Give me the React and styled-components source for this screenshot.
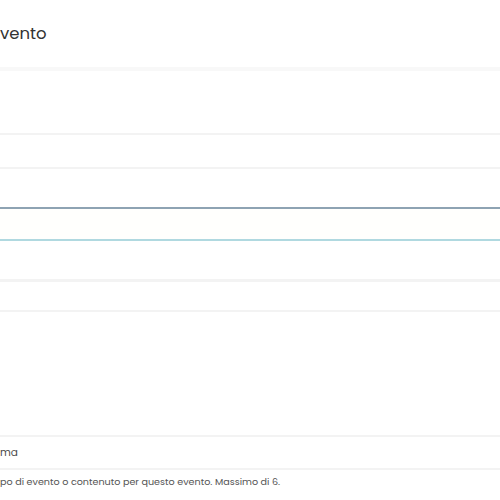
import * as React from "react"
import styled, { createGlobalStyle } from "styled-components"

const Global = createGlobalStyle`
    html, body {
        margin: 0;
        padding: 0;
        background: #ffffff;
    }
    body {
        font-family: "Poppins", "Lato", "Noto Sans", sans-serif;
        overflow: hidden;
    }
`

const Page = styled.div`
    width: 500px;
    height: 500px;
    display: flex;
    flex-direction: column;
    background: #ffffff;
    overflow: hidden;
`
const Header = styled.div`
    height: 67px;
    display: flex;
    align-items: center;
    border-bottom: 4px solid #f8f8f8;
`
const Title = styled.h1`
    margin: 0;
    font-size: 16.5px;
    font-weight: 400;
    color: #333333;
`
const Spacer = styled.div`
    height: ${p => p.h}px;
    flex-shrink: 0;
`
const Field = styled.div`
    height: ${p => p.h}px;
    flex-shrink: 0;
    display: flex;
    align-items: center;
    box-sizing: border-box;
    border-top: ${p => p.top || "2px solid #f3f3f3"};
    border-bottom: ${p => p.bottom || "2px solid #f3f3f3"};
    background: ${p => p.bg || "#ffffff"};
    font-size: 10.5px;
    color: #4a4a4a;
`
const Hint = styled.p`
    margin: 5px 0 0 0;
    font-size: 9.6px;
    color: #555555;
`

export default function App() {
    return (
        <Page>
            <Global />
            <Header>
                <Title>vento</Title>
            </Header>
            <Spacer h={62} />
            <Field h={36} />
            <Spacer h={38} />
            <Field
                h={34}
                top="2px solid #8ea3b3"
                bottom="2px solid #b0d9e0"
                bg="#fffffd"
            />
            <Spacer h={38} />
            <Field h={33} top="3px solid #f3f3f3" />
            <Spacer h={123} />
            <Field h={35}>ma</Field>
            <Hint>po di evento o contenuto per questo evento. Massimo di 6.</Hint>
        </Page>
    )
}
